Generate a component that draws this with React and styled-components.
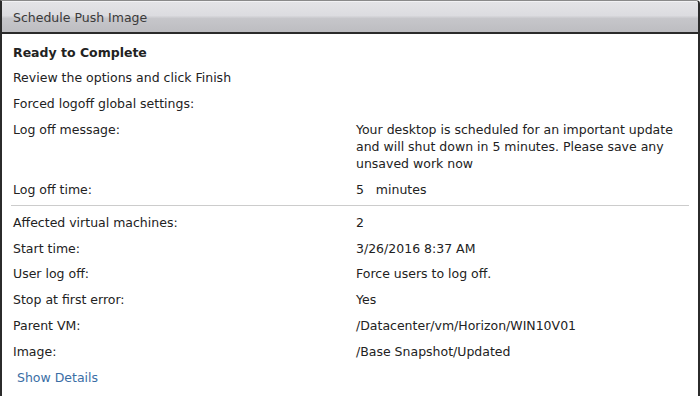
import React from 'react'
import styled, { createGlobalStyle } from 'styled-components'

const GlobalStyle = createGlobalStyle`
  html, body {
    margin: 0;
    padding: 0;
    background: #ffffff;
  }
`

const Dialog = styled.div`
  width: 700px;
  height: 396px;
  box-sizing: border-box;
  border-left: 2px solid #2b2b2b;
  border-right: 2px solid #2b2b2b;
  border-top: 1px solid #8a8a8a;
  border-top-right-radius: 4px;
  background: #ffffff;
  font-family: "DejaVu Sans", Verdana, sans-serif;
  font-size: 12.5px;
  color: #222222;
  overflow: hidden;
`

const Header = styled.div`
  height: 33px;
  box-sizing: border-box;
  border-bottom: 2px solid #2b2b2b;
  border-top: 1px solid #f2f2f4;
  background: linear-gradient(to bottom, #e4e4e7 0%, #dcdce0 45%, #c6c6ca 55%, #bdbdc1 100%);
  padding: 0 11px;
  display: flex;
  align-items: center;
  color: #3a3a3a;
  font-size: 12.5px;
`

const Body = styled.div`
  padding: 10px 11px 0 11px;
`

const Title = styled.div`
  font-weight: bold;
  line-height: 17px;
  margin-bottom: 8px;
`

const Line = styled.div`
  line-height: 17px;
  margin-bottom: 9px;
`

const Row = styled.div`
  display: grid;
  grid-template-columns: 343px 1fr;
  line-height: 17px;
  margin-bottom: ${(p) => (p.$tight ? '7px' : '8.8px')};
`

const Value = styled.div`
  padding-right: 8px;
`

const Divider = styled.hr`
  border: 0;
  border-top: 1px solid #cccccc;
  margin: 0 0 8px -2px;
  width: 678px;
`

const Link = styled.a`
  display: inline-block;
  margin-left: 4px;
  color: #3a6ea5;
  text-decoration: none;
  line-height: 17px;
`

const rows = [
  ['Affected virtual machines:', '2'],
  ['Start time:', '3/26/2016 8:37 AM'],
  ['User log off:', 'Force users to log off.'],
  ['Stop at first error:', 'Yes'],
  ['Parent VM:', '/Datacenter/vm/Horizon/WIN10V01'],
  ['Image:', '/Base Snapshot/Updated'],
]

export default function App() {
  return (
    <>
      <GlobalStyle />
      <Dialog>
        <Header>Schedule Push Image</Header>
        <Body>
          <Title>Ready to Complete</Title>
          <Line>Review the options and click Finish</Line>
          <Line>Forced logoff global settings:</Line>
          <Row>
            <div>Log off message:</div>
            <Value>
              Your desktop is scheduled for an important update and will shut down in 5 minutes. Please save any
              unsaved work now
            </Value>
          </Row>
          <Row $tight>
            <div>Log off time:</div>
            <Value>5&nbsp;&nbsp;&nbsp;minutes</Value>
          </Row>
          <Divider />
          {rows.map(([label, value]) => (
            <Row key={label}>
              <div>{label}</div>
              <Value>{value}</Value>
            </Row>
          ))}
          <Link href="#">Show Details</Link>
        </Body>
      </Dialog>
    </>
  )
}
